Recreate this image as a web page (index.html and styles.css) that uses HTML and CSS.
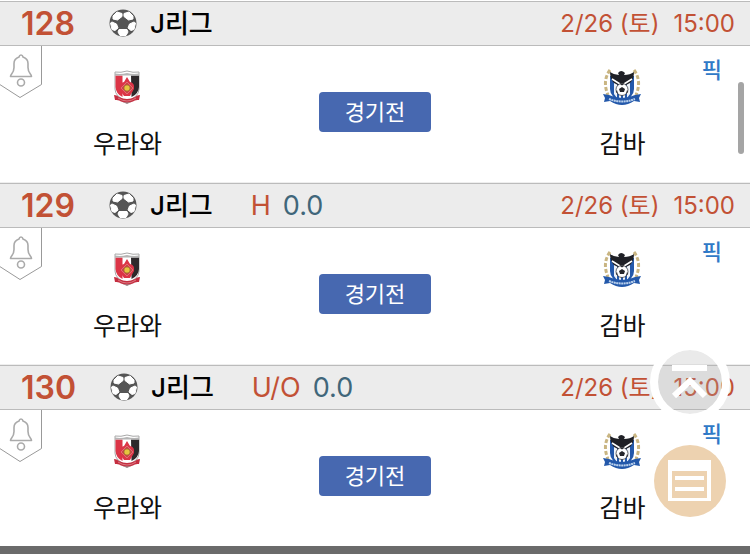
FILE: index.html
```
<!DOCTYPE html>
<html lang="ko">
<head>
    <meta charset="UTF-8">
    <meta name="viewport" content="width=device-width, initial-scale=1.0">
    <title>경기 목록</title>
    <link rel="stylesheet" href="styles.css">
</head>
<body>
    <!-- 반복해서 쓰는 아이콘 -->
    <svg class="icon-defs" aria-hidden="true">
        <symbol id="ball" viewBox="0 0 28 28">
            <circle cx="14" cy="14" r="13.500" fill="#555"/>
            <path fill="#fff" stroke="#fff" stroke-width="1" stroke-linejoin="round" d="M8 3 13 4.500 13 7.500 8.500 11 4 10 4 7zM20 3 15 4.500 15 7.500 19.500 11 24 10 24 7zM1.500 14 3 13 7.500 15 9 19 6 21.500 3 20.500zM26.500 14 25 13 20.500 15 19 19 22 21.500 25 20.500zM10 20.500h8l1 2.500-2 3.500h-6L9 23z"/>
        </symbol>
        <symbol id="bell" viewBox="0 0 42 52">
            <path d="M41.500-1v39.500L20 51.500-1 38" fill="#fff" stroke="#999" stroke-width="1"/>
            <g fill="none" stroke="#aaa" stroke-width="1.600">
                <path d="M10.500 30.500h21c0-3-3.500-3-3.500-9v-4c0-3.500-2-5.500-5-6.500-.3-1.500-1-2-2-2s-1.700.5-2 2c-3 1-5 3-5 6.500v4c0 6-3.500 6-3.500 9z" stroke-linejoin="round"/>
                <circle cx="21" cy="36.500" r="3.500"/>
            </g>
        </symbol>
        <symbol id="urawa" viewBox="0 0 26 34">
            <path d="M1 2q6 1 12-1 6 2 12 1v17q0 8-12 12Q1 27 1 19z" fill="#fff" stroke="#a9a9a9"/>
            <path d="M1.500 5.500h7V27Q2 24 1.500 17z" fill="#dc3547"/>
            <path d="M17 5.500h8V17q-.5 7-7.500 10z" fill="#2d292b"/>
            <path d="M1 3.500q6 1 12-.5 6 1.500 12 .5v2H1z" fill="#b5b5b5"/>
            <path d="M13 7 16 12q5 1 4 7l-4 7h-6l-5-7q0-6 5-7z" fill="#dc3547"/>
            <path d="M13 12 19 18 13 24 7 18z" fill="#c94747" stroke="#e98086" stroke-width=".7"/>
            <circle cx="13" cy="18" r="3" fill="#e6c43f" stroke="#99752c" stroke-width=".6"/>
            <path d="M0 25q3 0 5 2 8 4 16 0 2-2 5-2l-1 5q-4-.5-6 1.500l-6 2-6-2Q5 29.500 1 30z" fill="#c52e40"/>
            <path d="M4 28q9 6 18 0" fill="none" stroke="#e08c94" stroke-width=".8"/>
            <path d="M8 31.500q5 2 10 0l-5 2.500z" fill="#999"/>
        </symbol>
        <symbol id="gamba" viewBox="0 0 38 38">
            <path d="M7 2Q-1 13 5 27M31 2q8 11 2 25" fill="none" stroke="#c9b582" stroke-width="3" stroke-dasharray="4 2"/>
            <path d="M7 8h24v13q0 8-12 14Q7 29 7 21z" fill="#2358aa"/>
            <path d="M11 14h3v16l-3-4zM16 12h2v20h-2zM20 12h2v20h-2zM24 14h3v12l-3 4z" fill="#eef3fa"/>
            <path d="M7 4q4 3 9 3l-1-2q3-4 7 0l-1 2q6 0 10-3 0 7-4 11l-4 2-3-1-1 3-1-3-3 1-4-2Q7 11 7 4z" fill="#1f2026"/>
            <path d="M9 11l8 5M29 11l-8 5" stroke="#fff" stroke-width="1.500"/>
            <circle cx="19" cy="21.500" r="6" fill="#fff" stroke="#27282d" stroke-width=".7"/>
            <path d="M19 19l3 2-1 3h-4l-1-3zM17 16h4l-2 1.500zM14 22l1 4-2-2zM24 22l-1 4 2-2z" fill="#25262b"/>
            <path d="M0 26l6 1q13 6 26 0l6-1-2 4 1 4-6-1q-12 8-24 0l-6 1 1-4z" fill="#2358aa"/>
            <path d="M6 31q13 5 26 0" fill="none" stroke="#b9d0ec" stroke-width="2" stroke-dasharray="2 .5"/>
        </symbol>
    </svg>

    <main class="game-list">
        <section class="game">
            <header class="game-head">
                <strong class="game-no">128</strong>
                <svg class="ball"><use href="#ball"/></svg>
                <span class="league">J리그</span>
                <time class="game-time"><span>2/26 (토)</span><span>15:00</span></time>
            </header>
            <div class="game-body">
                <button class="alarm" type="button" aria-label="알림"><svg><use href="#bell"/></svg></button>
                <div class="team">
                    <svg class="urawa"><use href="#urawa"/></svg>
                    <span>우라와</span>
                </div>
                <button class="state" type="button">경기전</button>
                <div class="team">
                    <svg class="gamba"><use href="#gamba"/></svg>
                    <span>감바</span>
                </div>
                <a class="pick" href="#">픽</a>
            </div>
        </section>

        <section class="game">
            <header class="game-head">
                <strong class="game-no">129</strong>
                <svg class="ball"><use href="#ball"/></svg>
                <span class="league">J리그</span>
                <span class="odds"><span>H</span><span class="odds-value">0.0</span></span>
                <time class="game-time"><span>2/26 (토)</span><span>15:00</span></time>
            </header>
            <div class="game-body">
                <button class="alarm" type="button" aria-label="알림"><svg><use href="#bell"/></svg></button>
                <div class="team">
                    <svg class="urawa"><use href="#urawa"/></svg>
                    <span>우라와</span>
                </div>
                <button class="state" type="button">경기전</button>
                <div class="team">
                    <svg class="gamba"><use href="#gamba"/></svg>
                    <span>감바</span>
                </div>
                <a class="pick" href="#">픽</a>
            </div>
        </section>

        <section class="game">
            <header class="game-head">
                <strong class="game-no">130</strong>
                <svg class="ball"><use href="#ball"/></svg>
                <span class="league">J리그</span>
                <span class="odds"><span>U/O</span><span class="odds-value">0.0</span></span>
                <time class="game-time"><span>2/26 (토)</span><span>15:00</span></time>
            </header>
            <div class="game-body">
                <button class="alarm" type="button" aria-label="알림"><svg><use href="#bell"/></svg></button>
                <div class="team">
                    <svg class="urawa"><use href="#urawa"/></svg>
                    <span>우라와</span>
                </div>
                <button class="state" type="button">경기전</button>
                <div class="team">
                    <svg class="gamba"><use href="#gamba"/></svg>
                    <span>감바</span>
                </div>
                <a class="pick" href="#">픽</a>
            </div>
        </section>
    </main>
    <div class="bottom-bar"></div>

    <!-- 화면에 떠 있는 버튼 -->
    <div class="float-menu">
        <button class="go-top" type="button" aria-label="맨 위로">
            <svg viewBox="0 0 64 64">
                <path d="M14 18h35M16 46 32 31 47 46" fill="none" stroke="#fff" stroke-width="6"/>
            </svg>
        </button>
        <button class="go-list" type="button" aria-label="목록">
            <svg viewBox="0 0 72 72">
                <path d="M14 15h43v41H14z" fill="#fff"/>
                <path d="M18 26h35v27H18z" fill="#edd2b0"/>
                <path d="M21 33h29M21 44h29" stroke="#fff" stroke-width="4"/>
            </svg>
        </button>
    </div>
    <div class="scroll-thumb"></div>
</body>
</html>
```
FILE: styles.css
```
body{
    margin: 0;
    padding-top: 1px;
    background: #fff;
    font-family: Inter, "Noto Sans CJK KR", sans-serif;
    color: #111;
    overflow: hidden;
}

button{
    padding: 0;
    border: 0;
    background: none;
    font-family: inherit;
}

svg{
    display: block;
}

.icon-defs{
    position: absolute;
    width: 0;
    height: 0;
}

.game-head{
    box-sizing: border-box;
    height: 45px;
    padding: 0 15px 0 21px;
    display: flex;
    align-items: center;
    background: #ececec;
    border-top: 1px solid #bbb;
    border-bottom: 1px solid #bbb;
    line-height: 32px;
}

.game-no{
    font-size: 32px;
    font-weight: 600;
    color: #c25135;
}

.ball{
    width: 28px;
    height: 28px;
    margin: 0 13px 2px 34px;
}

.league{
    font-size: 26px;
    font-weight: 500;
    color: #000;
}

.odds{
    display: flex;
    gap: 12px;
    margin-left: 38px;
    font-size: 27px;
    color: #c25135;
}

.odds-value{
    color: #40667a;
}

.game-time{
    display: flex;
    gap: 14px;
    margin-left: auto;
    font-size: 24px;
    color: #c25135;
}

.game-body{
    position: relative;
    box-sizing: border-box;
    height: 137px;
    display: grid;
    grid-template-columns: 34% 32% 34%;
    align-items: start;
    justify-items: center;
    border-bottom: 1px solid #eee;
}

.game:last-child .game-body{
    height: 136px;
    border-bottom: 0;
}

.alarm{
    position: absolute;
    left: 0;
    top: 0;
}

.alarm svg{
    width: 42px;
    height: 52px;
}

.team{
    display: flex;
    flex-direction: column;
    align-items: center;
    gap: 20px;
    padding-top: 22px;
    font-size: 25px;
    line-height: 36px;
}

.urawa{
    width: 26px;
    height: 38px;
}

.gamba{
    width: 38px;
    height: 38px;
}

.state{
    width: 112px;
    height: 40px;
    margin-top: 46px;
    padding-bottom: 4px;
    border-radius: 4px;
    background: #4768b0;
    color: #fff;
    font-size: 22px;
}

.pick{
    position: absolute;
    right: 28px;
    top: 8px;
    font-size: 22px;
    font-weight: 500;
    line-height: 32px;
    color: #3079c7;
    text-decoration: none;
}

.bottom-bar{
    height: 8px;
    background: #6b6b6b;
}

.float-menu{
    position: fixed;
    right: 20px;
    bottom: 38px;
    display: flex;
    flex-direction: column;
    align-items: center;
    gap: 23px;
}

.go-top,
.go-list{
    display: flex;
    justify-content: center;
    align-items: center;
    border-radius: 50%;
}

/* 안쪽은 반투명, 바깥 테두리는 흰색 */
.go-top{
    border: 8px solid #fff;
    background: rgba(170, 170, 170, 0.25);
    background-clip: padding-box;
}

.go-top svg{
    width: 64px;
    height: 64px;
}

.go-list{
    background: #edd2b0;
}

.go-list svg{
    width: 72px;
    height: 72px;
}

.scroll-thumb{
    position: fixed;
    right: 6px;
    top: 82px;
    width: 6px;
    height: 72px;
    border-radius: 3px;
    background: #a5a5a5;
}
```
